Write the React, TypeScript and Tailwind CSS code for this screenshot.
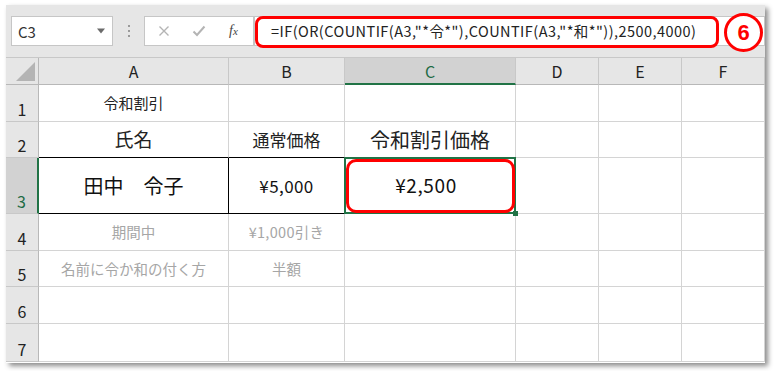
import React from "react";

const FONT = { fontFamily: '"Noto Sans CJK JP", "Noto Sans", sans-serif' };

function Cell({
  children,
  className = "",
}: {
  children?: React.ReactNode;
  className?: string;
}) {
  return (
    <div
      className={
        "flex items-center justify-center border-r border-b border-[#d4d4d4] bg-white whitespace-nowrap overflow-visible " +
        className
      }
    >
      {children}
    </div>
  );
}

function RowHead({ n, sel = false }: { n: number; sel?: boolean }) {
  return (
    <div
      className={
        "flex items-end justify-center pb-[4px] text-[16px] leading-none border-b border-[#c8c8c8] " +
        (sel
          ? "bg-[#d2d2d2] text-[#1e6b45] border-r-2 border-r-[#217346]"
          : "bg-[#e6e6e6] text-[#222] border-r border-r-[#b8b8b8]")
      }
    >
      {n}
    </div>
  );
}

function ColHead({ l, sel = false }: { l: string; sel?: boolean }) {
  return (
    <div
      className={
        "flex items-center justify-center text-[16px] leading-none border-r border-[#c8c8c8] " +
        (sel
          ? "bg-[#d2d2d2] text-[#1e6b45] border-b-2 border-b-[#217346]"
          : "bg-[#e6e6e6] text-[#222] border-b border-b-[#b8b8b8]")
      }
    >
      {l}
    </div>
  );
}

export default function App() {
  return (
    <div className="w-[776px] h-[371px] bg-white pt-[5px] pl-[6px]" style={FONT}>
      <div className="w-[759px] h-[358px] bg-white shadow-[3px_3px_5px_rgba(0,0,0,0.45)] flex flex-col overflow-hidden">
        {/* toolbar */}
        <div className="h-[52px] bg-[#e6e6e6] flex items-center pl-[5px] pr-0 shrink-0">
          <div className="w-[102px] h-[30px] bg-white border border-[#c6c6c6] flex items-center pl-[6px] pr-[6px] justify-between">
            <span className="text-[15px] text-[#333] leading-none">C3</span>
            <svg width="10" height="6" viewBox="0 0 10 6">
              <path d="M1 0.5 L9 0.5 L5 5.5 Z" fill="#6b6b6b" />
            </svg>
          </div>
          <div className="w-[31px] flex flex-col items-center justify-center gap-[3px]">
            <span className="w-[2px] h-[2px] bg-[#9a9a9a] block" />
            <span className="w-[2px] h-[2px] bg-[#9a9a9a] block" />
            <span className="w-[2px] h-[2px] bg-[#9a9a9a] block" />
          </div>
          <div className="w-[110px] h-[30px] bg-white border border-[#c6c6c6] flex items-center">
            <svg width="12" height="12" viewBox="0 0 12 12" className="ml-[13px]">
              <path d="M1.5 1.5 L10.5 10.5 M10.5 1.5 L1.5 10.5" stroke="#b4b4b4" strokeWidth="1.4" />
            </svg>
            <svg width="14" height="12" viewBox="0 0 14 12" className="ml-[22px]">
              <path d="M1.5 6.5 L5 10 L12.5 1.5" stroke="#b4b4b4" strokeWidth="2" fill="none" />
            </svg>
            <span
              className="ml-[23px] text-[14px] italic text-[#444] leading-none"
              style={{ fontFamily: '"Liberation Serif", serif' }}
            >
              f<span className="text-[11px]">x</span>
            </span>
          </div>
          <div className="relative flex-1 h-[30px] bg-white border border-[#c6c6c6] flex items-center">
            <div className="absolute left-0 top-[-1px] w-[464px] h-[32px] border-[3px] border-[#ff0000] rounded-[8px]" />
            <span className="ml-[16px] text-[14.5px] text-[#222] leading-none whitespace-nowrap tracking-[0.45px]">
              =IF(OR(COUNTIF(A3,"*令*"),COUNTIF(A3,"*和*")),2500,4000)
            </span>
            <div className="absolute left-[469px] top-[-4px] w-[39px] h-[39px] rounded-full border-[3px] border-[#ff0000] bg-white flex items-center justify-center">
              <span className="text-[22px] font-bold text-[#ff0000] leading-none" style={{ fontFamily: '"Liberation Sans", Arial, sans-serif' }}>
                6
              </span>
            </div>
          </div>
        </div>

        {/* sheet */}
        <div className="grid grid-cols-[33px_190px_116px_171px_83px_83px_83px] grid-rows-[27px_37px_36px_56px_37px_36px_37px_38px] border-t border-[#c8c8c8]">
          {/* header row */}
          <div className="bg-[#e6e6e6] border-r border-b border-[#b8b8b8] flex items-end justify-end p-[3px]">
            <svg width="19" height="19" viewBox="0 0 19 19">
              <path d="M19 0 L19 19 L0 19 Z" fill="#b4b4b4" />
            </svg>
          </div>
          <ColHead l="A" />
          <ColHead l="B" />
          <ColHead l="C" sel />
          <ColHead l="D" />
          <ColHead l="E" />
          <ColHead l="F" />

          {/* row 1 */}
          <RowHead n={1} />
          <Cell className="text-[15px] text-[#222]">令和割引</Cell>
          <Cell />
          <Cell />
          <Cell />
          <Cell />
          <Cell />

          {/* row 2 */}
          <RowHead n={2} />
          <Cell className="text-[19px] text-[#222] border-b-black">氏名</Cell>
          <Cell className="text-[17px] text-[#222] border-b-black">通常価格</Cell>
          <Cell className="text-[20px] text-[#222]">令和割引価格</Cell>
          <Cell />
          <Cell />
          <Cell />

          {/* row 3 */}
          <RowHead n={3} sel />
          <Cell className="text-[20px] text-[#111] border-r-black border-b-black">田中　令子</Cell>
          <Cell className="text-[17px] text-[#111] border-r-black border-b-black tracking-[0.4px]">¥5,000</Cell>
          <div className="relative bg-white border-r border-b border-[#d4d4d4] flex items-center justify-center">
            <div className="absolute inset-[-1px] border-2 border-[#217346]" />
            <div className="absolute left-[1px] top-[1px] right-[0px] bottom-[0px] border-[3px] border-[#ff0000] rounded-[10px]" />
            <span className="text-[19px] text-[#111] relative tracking-[0.6px] mr-[8px]">¥2,500</span>
            <div className="absolute right-[-3px] bottom-[-3px] w-[5px] h-[5px] bg-[#217346]" />
          </div>
          <Cell />
          <Cell />
          <Cell />

          {/* row 4 */}
          <RowHead n={4} />
          <Cell className="text-[14.5px] text-[#a6a6a6]">期間中</Cell>
          <Cell className="text-[14.5px] text-[#a6a6a6] tracking-[0.3px]">¥1,000引き</Cell>
          <Cell />
          <Cell />
          <Cell />
          <Cell />

          {/* row 5 */}
          <RowHead n={5} />
          <Cell className="text-[14.5px] text-[#a6a6a6]">名前に令か和の付く方</Cell>
          <Cell className="text-[14.5px] text-[#a6a6a6]">半額</Cell>
          <Cell />
          <Cell />
          <Cell />
          <Cell />

          {/* row 6 */}
          <RowHead n={6} />
          <Cell />
          <Cell />
          <Cell />
          <Cell />
          <Cell />
          <Cell />

          {/* row 7 */}
          <RowHead n={7} />
          <Cell />
          <Cell />
          <Cell />
          <Cell />
          <Cell />
          <Cell />
        </div>
      </div>
    </div>
  );
}
